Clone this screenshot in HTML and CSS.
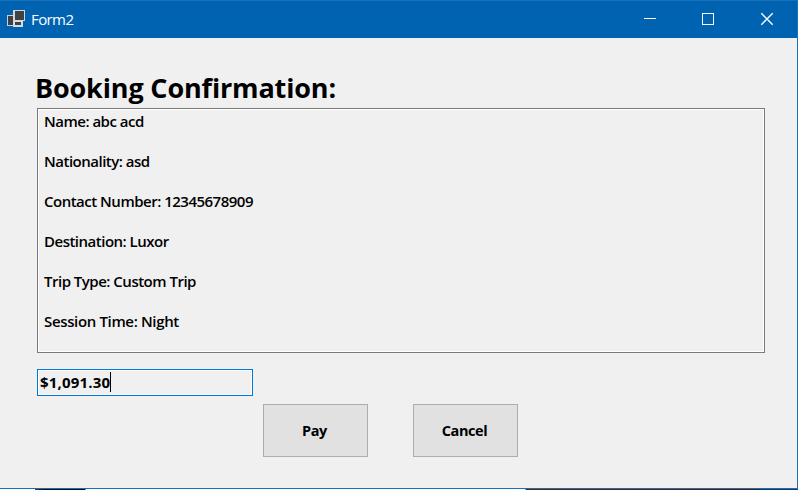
FILE: index.html
```html
<!DOCTYPE html>
<html lang="en">
<head>
<meta charset="utf-8">
<title>Form2</title>
<link rel="stylesheet" href="styles.css">
</head>
<body>
<div class="window">
  <header class="titlebar">
    <svg class="app-icon" width="20" height="18" viewBox="0 0 20 18" shape-rendering="crispEdges">
      <rect x="0" y="5" width="9" height="11" fill="#c3d0dc"/>
      <rect x="1" y="6" width="6" height="9" fill="#414141"/>
      <rect x="6" y="10" width="10" height="7" fill="#d3dde7"/>
      <rect x="8" y="12" width="6" height="3" fill="#414141"/>
      <rect x="6" y="0" width="12" height="11" fill="#d3d6da"/>
      <rect x="8" y="1" width="9" height="9" fill="#414141"/>
    </svg>
    <span class="caption">Form2</span>
    <div class="controls">
      <svg width="58" height="37" viewBox="0 0 58 37"><path d="M23 17.5h12" stroke="#fff"/></svg>
      <svg width="58" height="37" viewBox="0 0 58 37"><rect x="23.5" y="12.5" width="11" height="11" fill="none" stroke="#fff"/></svg>
      <svg width="59" height="37" viewBox="0 0 59 37"><path d="M24.3 12.3l11.4 11.4M35.7 12.3L24.3 23.7" stroke="#fff" stroke-width="1.3"/></svg>
    </div>
  </header>
  <main class="content">
    <h1>Booking Confirmation:</h1>
    <section class="details">
      <p>Name: abc acd</p>
      <p>Nationality: asd</p>
      <p>Contact Number: 12345678909</p>
      <p>Destination: Luxor</p>
      <p>Trip Type: Custom Trip</p>
      <p class="session">Session Time: Night</p>
    </section>
    <div class="total"><span>$1,091.30</span><i class="caret"></i></div>
    <div class="actions">
      <button>Pay</button>
      <button>Cancel</button>
    </div>
  </main>
</div>
<div class="backdrop"></div>
</body>
</html>
```
FILE: styles.css
```css
* { box-sizing: border-box; }
body {
  margin: 0;
  width: 798px;
  height: 490px;
  overflow: hidden;
  background: #fff;
  color: #000;
  font-family: "Open Sans", "Noto Sans", sans-serif;
}
.window {
  display: flex;
  flex-direction: column;
  height: 489px;
  background: #f0f0f0;
  border: solid #1770b8;
  border-width: 1px 1px 1px 0;
}
.titlebar {
  display: flex;
  flex: none;
  height: 37px;
  padding-left: 7px;
  background: #0063b1;
}
.app-icon { margin-top: 9px; }
.caption {
  margin-left: 4px;
  color: #fff;
  font-size: 15px;
  line-height: 37px;
  letter-spacing: -0.6px;
}
.controls { display: flex; margin-left: auto; margin-right: 1px; }
.content { padding: 31px 32px 0 37px; }
h1 {
  margin: 0 0 0 -2px;
  height: 39px;
  font-size: 27px;
  line-height: 37px;
  font-weight: 700;
  letter-spacing: -0.15px;
  white-space: nowrap;
}
.details {
  width: 728px;
  height: 245px;
  padding: 2px 6px;
  border: 1px solid #7a7a7a;
  box-shadow: inset 0 0 0 1px #fff;
  font-size: 15px;
  line-height: 20px;
  font-weight: 600;
  letter-spacing: -0.5px;
}
.details p { margin: 0 0 20px; }
.details .session { letter-spacing: -0.35px; }
.total {
  display: flex;
  align-items: center;
  width: 216px;
  height: 27px;
  margin-top: 16px;
  padding: 0 0 2px 2px;
  border: 1px solid #0078d7;
  box-shadow: inset 0 0 0 1px #fff;
  font-size: 15px;
  font-weight: 700;
  letter-spacing: 0.2px;
}
.caret { width: 1px; height: 20px; background: #000; }
.actions { display: flex; gap: 45px; margin: 8px 0 0 226px; }
.actions button {
  width: 105px;
  height: 53px;
  padding: 0 2px 0 0;
  border: 1px solid #adadad;
  background: #e1e1e1;
  color: #000;
  font: 700 14.5px "Open Sans", "Noto Sans", sans-serif;
  letter-spacing: -0.4px;
}
.backdrop {
  height: 1px;
  background: linear-gradient(90deg, #fff 35px, #6c2b0c 35px, #160c14 45px, #090611 85px, #fff 86px, #fff 525px, #5c2506 526px, #4b200a 758px, #20345f 759px);
}
```
